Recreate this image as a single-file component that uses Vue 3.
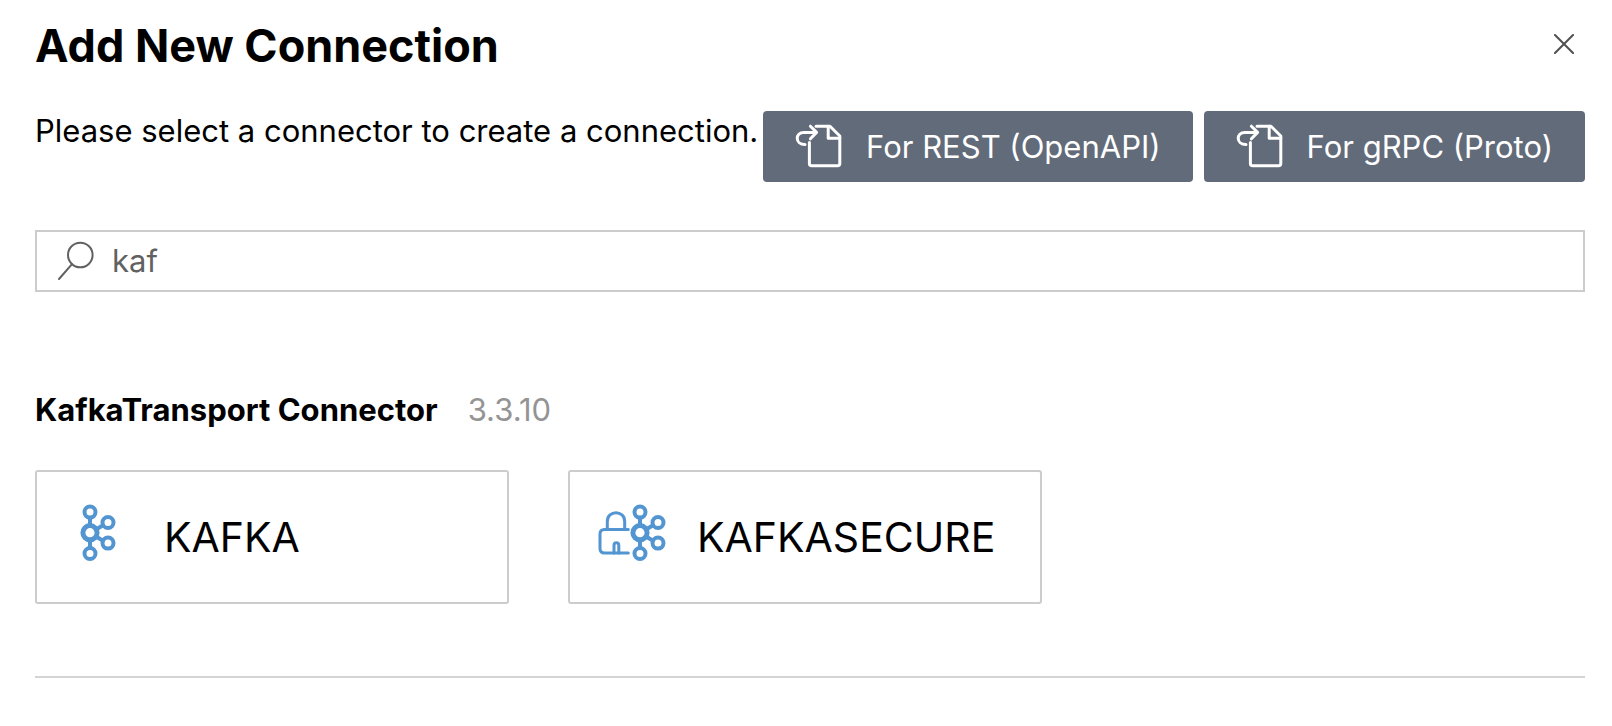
<script setup>
import { ref } from 'vue'

const query = ref('kaf')
const imports = ['For REST (OpenAPI)', 'For gRPC (Proto)']
const connectors = [
  { name: 'KAFKA', secure: false },
  { name: 'KAFKASECURE', secure: true },
]
</script>

<template>
  <main class="dialog">
    <header class="top">
      <h1>Add New Connection</h1>
      <button class="close" type="button" aria-label="Close">
        <svg width="20" height="20" viewBox="0 0 20 20"><path d="M1 1 19 19M19 1 1 19" /></svg>
      </button>
    </header>

    <div class="intro">
      <p>Please select a connector to create a connection.</p>
      <div class="actions">
        <button v-for="label in imports" :key="label" class="import" type="button">
          <svg width="47" height="44" viewBox="0 0 47 44" aria-hidden="true">
            <path d="M21 2.2H35L44.8 12V39.5Q44.8 41.8 42.5 41.8H16.7Q14.4 41.8 14.4 39.5V18.5" />
            <path d="M33.2 2.2V14.2H44.8" />
            <path d="M10 20.6C-.2 20.6-.2 8.4 9 8.4H21M15.4 2.2 21.6 8.4 15.4 14.8" />
          </svg>
          <span>{{ label }}</span>
        </button>
      </div>
    </div>

    <label class="search">
      <svg width="36" height="40" viewBox="0 0 36 40" aria-hidden="true">
        <circle cx="22.3" cy="14" r="12.3" />
        <path d="M14 23.2 1 38" />
      </svg>
      <input v-model="query" type="text" aria-label="Search connectors" />
    </label>

    <section class="group">
      <h2>KafkaTransport Connector<span>3.3.10</span></h2>
      <div class="cards">
        <button v-for="c in connectors" :key="c.name" class="card" type="button">
          <svg width="72" height="58" viewBox="0 0 72 58" aria-hidden="true">
            <g v-if="c.secure" class="lock">
              <path d="M32.3 25.4H8.5Q4 25.4 4 29.9V44.5Q4 49 8.5 49H32.3" />
              <path d="M11.3 25V17.4C11.3 5.8 28.7 5.8 28.7 17.4V25" />
              <path d="M18 49V41.5C18 37.8 22.8 37.8 22.8 41.5V49" />
            </g>
            <g class="nodes" :transform="c.secure ? 'translate(17 0)' : undefined">
              <path d="M27 14V22M27 36V44M33 25.5 40 21.3M33 32.5 40 36.7" />
              <circle class="hub" cx="27" cy="28.7" r="7.1" />
              <circle cx="27" cy="8.1" r="5.5" />
              <circle cx="27" cy="49.5" r="5.5" />
              <circle cx="45" cy="18.5" r="5.5" />
              <circle cx="45" cy="39.1" r="5.5" />
            </g>
          </svg>
          <span>{{ c.name }}</span>
        </button>
      </div>
    </section>
    <hr />
  </main>
</template>

<style>
body {
  margin: 0;
  background: #fff;
}
</style>

<style scoped>
.dialog {
  padding: 16px 27px 40px 35px;
  color: #000;
  font-family: Inter, "Noto Sans", sans-serif;
  font-size: 31px;
  line-height: 40px;
}
button,
input {
  font: inherit;
  color: inherit;
}
button {
  cursor: pointer;
}
svg {
  flex: none;
  fill: none;
  stroke: currentColor;
  stroke-linecap: round;
  stroke-linejoin: round;
}
.top {
  display: flex;
  justify-content: space-between;
  align-items: flex-start;
}
h1 {
  margin: 0;
  font-size: 45px;
  line-height: 60px;
  font-weight: 700;
}
.close {
  display: flex;
  margin: 8px 1px 0 0;
  padding: 10px;
  border: 0;
  background: none;
  color: #505050;
  stroke-width: 2;
}
.intro {
  display: flex;
  justify-content: space-between;
  align-items: flex-start;
  margin-top: 35px;
}
.intro p {
  margin: 0;
  white-space: nowrap;
}
.actions {
  display: flex;
  gap: 11px;
}
.import {
  display: flex;
  align-items: center;
  gap: 24px;
  height: 71px;
  padding: 0 32px;
  border: 0;
  border-radius: 4px;
  background: #626b7a;
  color: #fff;
  stroke-width: 3;
  white-space: nowrap;
}
.import svg {
  margin-bottom: 2px;
}
.search {
  display: flex;
  align-items: center;
  gap: 18px;
  margin-top: 48px;
  padding: 0 20px 0 21px;
  height: 58px;
  border: 2px solid #ccc;
  color: #616161;
  stroke-width: 2;
}
.search input {
  flex: 1;
  min-width: 0;
  padding: 0;
  border: 0;
  outline: 0;
  background: none;
}
.group {
  margin-top: 98px;
}
h2 {
  margin: 0;
  font-size: 31px;
  line-height: 40px;
  font-weight: 700;
}
h2 span {
  margin-left: 30px;
  font-weight: 400;
  color: #949494;
}
.cards {
  display: flex;
  flex-wrap: wrap;
  gap: 59px;
  margin-top: 40px;
}
.card {
  display: flex;
  align-items: center;
  gap: 29px;
  width: 474px;
  height: 134px;
  padding: 0 26px;
  border: 2px solid #ccc;
  border-radius: 3px;
  background: #fff;
  font-size: 41px;
}
.card svg {
  margin-bottom: 8px;
  color: #5295d1;
}
.lock {
  stroke-width: 3;
}
.nodes {
  stroke-width: 4;
}
.hub {
  stroke-width: 5;
}
hr {
  margin: 72px 0 0;
  border: 0;
  border-top: 2px solid #d4d4d4;
}
</style>
